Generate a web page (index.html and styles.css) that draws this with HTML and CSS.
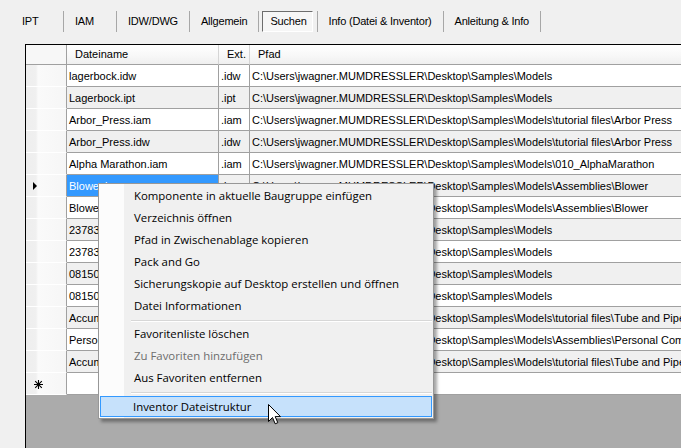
FILE: index.html
```html
<!DOCTYPE html>
<html>
<head>
<meta charset="utf-8">
<link rel="stylesheet" href="styles.css">
</head>
<body>
<div class="app">
  <div class="toolbar">
    <div class="tab tab-min">IPT</div><div class="sep"></div>
    <div class="tab tab-min">IAM</div><div class="sep"></div>
    <div class="tab">IDW/DWG</div><div class="sep"></div>
    <div class="tab">Allgemein</div><div class="sep"></div>
    <div class="tab tab-pressed"><span class="pressed">Suchen</span></div><div class="sep"></div>
    <div class="tab">Info (Datei &amp; Inventor)</div><div class="sep"></div>
    <div class="tab">Anleitung &amp; Info</div><div class="sep"></div>
  </div>
  <div class="gridwrap">
    <div class="grid">
      <div class="row head">
        <div class="rh"></div>
        <div class="c">Dateiname</div>
        <div class="c">Ext.</div>
        <div class="c">Pfad</div>
      </div>
      <div class="row"><div class="rh"></div><div class="c">lagerbock.idw</div><div class="c">.idw</div><div class="c">C:\Users\jwagner.MUMDRESSLER\Desktop\Samples\Models</div></div>
      <div class="row alt"><div class="rh"></div><div class="c">Lagerbock.ipt</div><div class="c">.ipt</div><div class="c">C:\Users\jwagner.MUMDRESSLER\Desktop\Samples\Models</div></div>
      <div class="row"><div class="rh"></div><div class="c">Arbor_Press.iam</div><div class="c">.iam</div><div class="c">C:\Users\jwagner.MUMDRESSLER\Desktop\Samples\Models\tutorial files\Arbor Press</div></div>
      <div class="row alt"><div class="rh"></div><div class="c">Arbor_Press.idw</div><div class="c">.idw</div><div class="c">C:\Users\jwagner.MUMDRESSLER\Desktop\Samples\Models\tutorial files\Arbor Press</div></div>
      <div class="row"><div class="rh"></div><div class="c">Alpha Marathon.iam</div><div class="c">.iam</div><div class="c">C:\Users\jwagner.MUMDRESSLER\Desktop\Samples\Models\010_AlphaMarathon</div></div>
      <div class="row alt"><div class="rh"><span class="cur-row"></span></div><div class="c sel">Blower.iam</div><div class="c">.iam</div><div class="c">C:\Users\jwagner.MUMDRESSLER\Desktop\Samples\Models\Assemblies\Blower</div></div>
      <div class="row"><div class="rh"></div><div class="c">Blower.idw</div><div class="c">.idw</div><div class="c">C:\Users\jwagner.MUMDRESSLER\Desktop\Samples\Models\Assemblies\Blower</div></div>
      <div class="row alt"><div class="rh"></div><div class="c">23783.ipt</div><div class="c">.ipt</div><div class="c">C:\Users\jwagner.MUMDRESSLER\Desktop\Samples\Models</div></div>
      <div class="row"><div class="rh"></div><div class="c">23783.idw</div><div class="c">.idw</div><div class="c">C:\Users\jwagner.MUMDRESSLER\Desktop\Samples\Models</div></div>
      <div class="row alt"><div class="rh"></div><div class="c">08150.ipt</div><div class="c">.ipt</div><div class="c">C:\Users\jwagner.MUMDRESSLER\Desktop\Samples\Models</div></div>
      <div class="row"><div class="rh"></div><div class="c">08150.idw</div><div class="c">.idw</div><div class="c">C:\Users\jwagner.MUMDRESSLER\Desktop\Samples\Models</div></div>
      <div class="row alt"><div class="rh"></div><div class="c">Accumulator.iam</div><div class="c">.iam</div><div class="c">C:\Users\jwagner.MUMDRESSLER\Desktop\Samples\Models\tutorial files\Tube and Pipe</div></div>
      <div class="row"><div class="rh"></div><div class="c">Personal Computer.iam</div><div class="c">.iam</div><div class="c">C:\Users\jwagner.MUMDRESSLER\Desktop\Samples\Models\Assemblies\Personal Comp</div></div>
      <div class="row alt"><div class="rh"></div><div class="c">Accumulator.idw</div><div class="c">.idw</div><div class="c">C:\Users\jwagner.MUMDRESSLER\Desktop\Samples\Models\tutorial files\Tube and Pipe</div></div>
      <div class="row newrow"><div class="rh"><svg class="star" width="9" height="9" viewBox="0 0 9 9"><path d="M4.5 0V9M0 4.5H9M1.2 1.2L7.8 7.8M7.8 1.2L1.2 7.8" stroke="#000" stroke-width="1.1"/></svg></div><div class="c"></div><div class="c"></div><div class="c"></div></div>
    </div>
  </div>

  <div class="menu">
    <div class="item">Komponente in aktuelle Baugruppe einfügen</div>
    <div class="item">Verzeichnis öffnen</div>
    <div class="item">Pfad in Zwischenablage kopieren</div>
    <div class="item">Pack and Go</div>
    <div class="item">Sicherungskopie auf Desktop erstellen und öffnen</div>
    <div class="item">Datei Informationen</div>
    <div class="msep"></div>
    <div class="item">Favoritenliste löschen</div>
    <div class="item disabled">Zu Favoriten hinzufügen</div>
    <div class="item">Aus Favoriten entfernen</div>
    <div class="msep"></div>
    <div class="item hot">Inventor Dateistruktur</div>
  </div>

  <svg class="pointer" width="13" height="21" viewBox="0 0 13 21"><path d="M0.5 0.5V17.5L4.5 13.5L7.2 19.8L9.8 18.7L7.2 12.6H12.5Z" fill="#fff" stroke="#000" stroke-width="1" stroke-linejoin="round"/></svg>
</div>
</body>
</html>
```

FILE: styles.css
```css
html, body {
  margin: 0;
  padding: 0;
}
body {
  background: #f0f0f0;
  font-family: "Liberation Sans", Arial, sans-serif;
  font-size: 11px;
  color: #000;
}
.app {
  position: relative;
  width: 681px;
  height: 448px;
  overflow: hidden;
  display: flex;
  flex-direction: column;
}
.toolbar {
  height: 44px;
  flex: none;
  display: flex;
  align-items: center;
  padding-left: 11px;
  box-sizing: border-box;
  padding-bottom: 1px;
}
.tab {
  padding: 0 11px;
  font-size: 11px;
  letter-spacing: -0.2px;
  line-height: 21px;
  white-space: nowrap;
}
.tab-min {
  min-width: 30px;
}
.tab-pressed {
  padding: 0 4px 0 3px;
}
.pressed {
  display: block;
  height: 21px;
  box-sizing: border-box;
  padding: 0 5px 0 7px;
  line-height: 19px;
  border: 1px solid;
  border-color: #6d6d6d #ffffff #ffffff #6d6d6d;
  background: #f6f6f6;
}
.sep {
  width: 1px;
  height: 21px;
  background: #a7a7a7;
}
.gridwrap {
  flex: 1;
  margin-left: 25px;
  border-left: 1px solid #000;
  border-top: 1px solid #000;
  background: #ababab;
  overflow: hidden;
}
.grid {
  width: 700px;
}
.row {
  display: grid;
  grid-template-columns: 41px 152px 31px 470px;
  height: 22px;
  background: #fff;
}
.row.alt .c {
  background: #f0f0f0;
}
.c, .rh {
  box-sizing: border-box;
  border-right: 1px solid #a0a0a0;
  border-bottom: 1px solid #a0a0a0;
  padding-left: 2px;
  padding-top: 1px;
  line-height: 20px;
  white-space: nowrap;
  overflow: hidden;
}
.rh {
  position: relative;
  background: linear-gradient(to right, #eeeeee 0, #f0f0f0 10px, #fafafa 12px, #f6f6f6 100%);
  border-bottom-color: #ffffff;
  border-right-color: #a0a0a0;
}
.head {
  height: 20px;
}
.head .c {
  background: linear-gradient(to bottom, #ffffff 0, #f7f7f7 60%, #efefef 100%);
  padding-left: 8px;
  padding-top: 0;
  line-height: 19px;
  border-right-color: #d5d5d5;
  border-bottom-color: #a0a0a0;
}
.head .rh {
  background: #f7f7f7;
  border-bottom-color: #a0a0a0;
}
.c.sel {
  background: #3399ff !important;
  color: #fff;
}
.cur-row {
  position: absolute;
  left: 7px;
  top: 7px;
  width: 0;
  height: 0;
  border-top: 4px solid transparent;
  border-bottom: 4px solid transparent;
  border-left: 4px solid #000;
}
.star {
  position: absolute;
  left: 8px;
  top: 7px;
}
.newrow .c {
  background: #fff;
}
.menu {
  position: absolute;
  left: 98px;
  top: 183px;
  width: 336px;
  box-sizing: border-box;
  border: 1px solid #979797;
  background: linear-gradient(to right, #fcfcfc 0, #fcfcfc 25px, #f0f0f0 25px);
  padding: 1px;
  box-shadow: 3px 3px 3px rgba(0, 0, 0, 0.35);
  font-family: "Open Sans", "Noto Sans", sans-serif;
  font-size: 11.4px;
}
.item {
  height: 22px;
  line-height: 22px;
  padding-left: 34px;
  box-sizing: border-box;
  white-space: nowrap;
  color: #000;
}
.item.disabled {
  color: #6d6d6d;
}
.item.hot {
  margin-top: 1px;
  height: 21px;
  line-height: 19px;
  border: 1px solid #3399ff;
  background: #c6e1fb;
  padding-left: 32px;
}
.msep {
  height: 6px;
  position: relative;
}
.msep::after {
  content: "";
  position: absolute;
  left: 31px;
  right: 0;
  top: 3px;
  height: 1px;
  background: #d7d7d7;
  border-bottom: 1px solid #ffffff;
}
.pointer {
  position: absolute;
  left: 268px;
  top: 404px;
}
```
